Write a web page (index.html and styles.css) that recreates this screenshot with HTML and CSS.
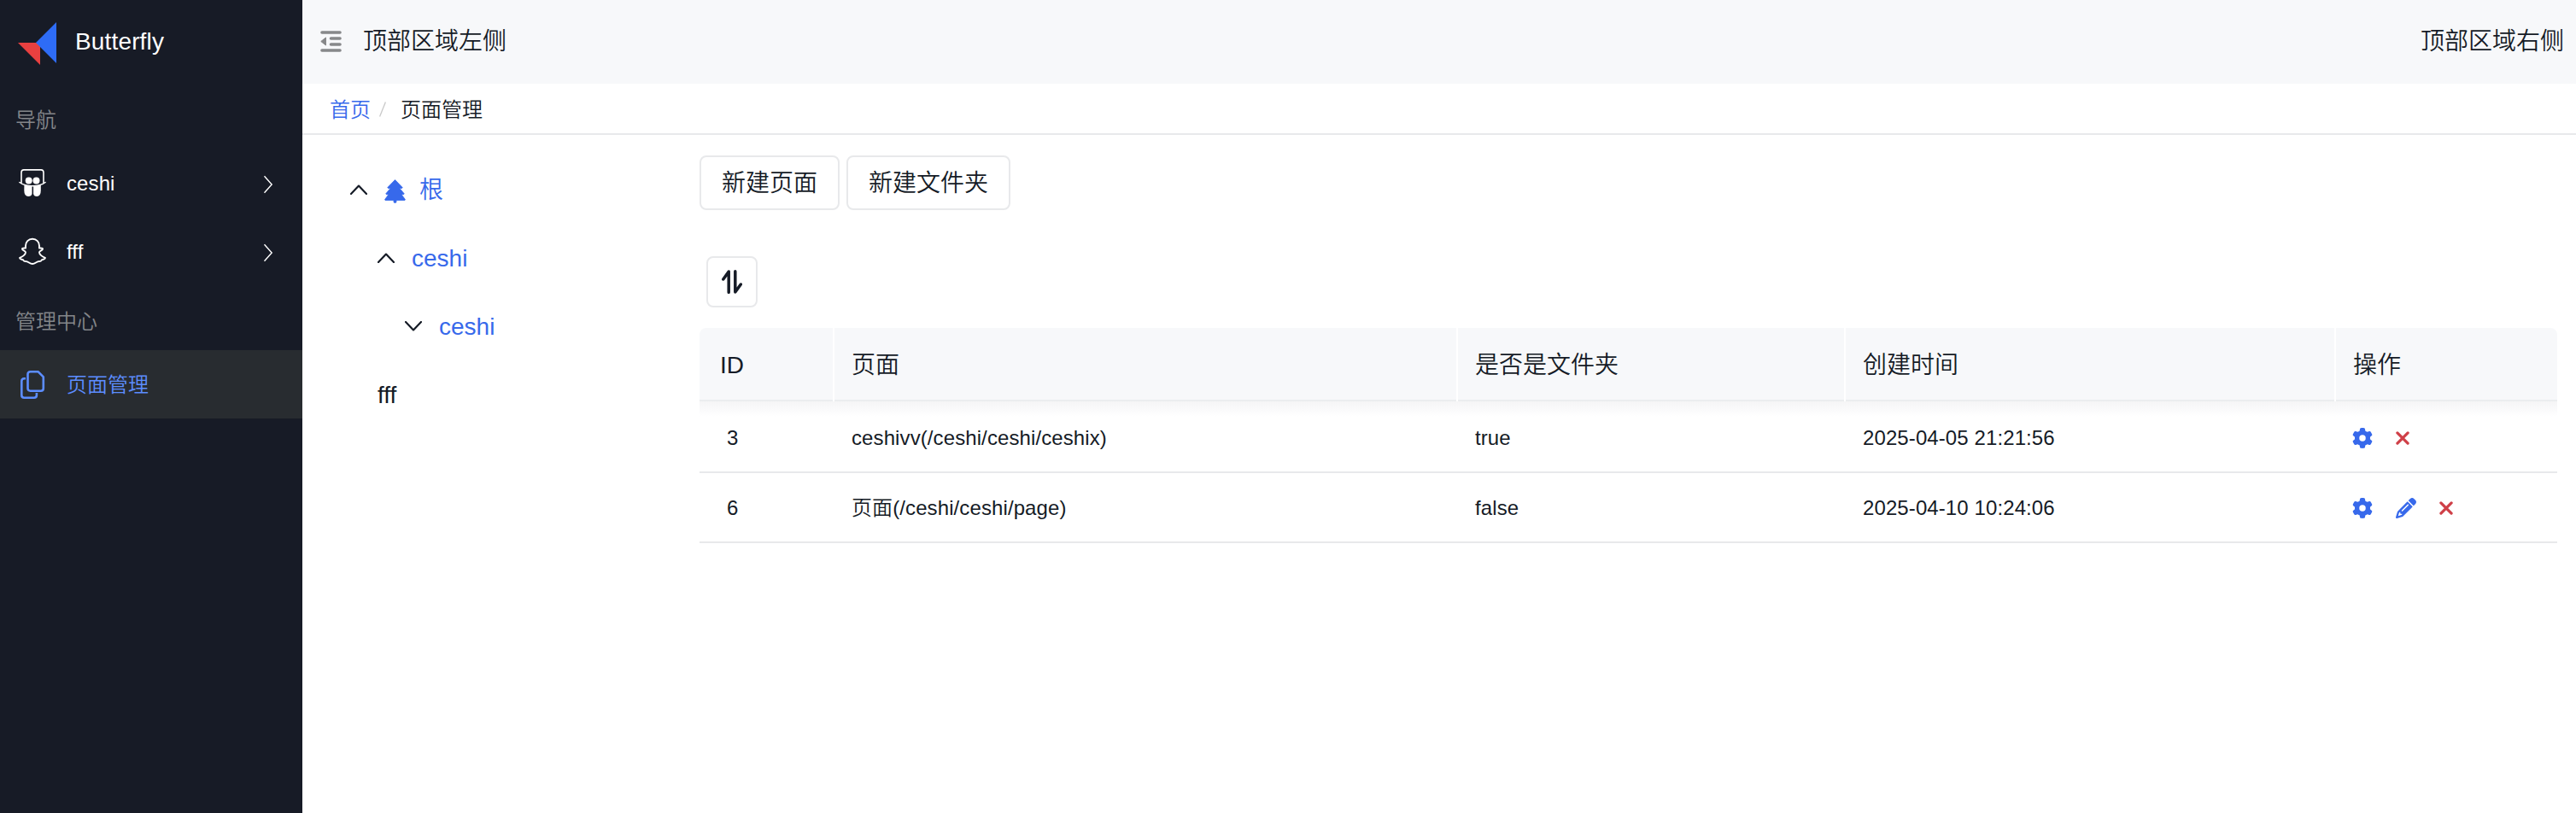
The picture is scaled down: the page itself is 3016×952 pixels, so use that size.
FILE: index.html
```html
<!DOCTYPE html>
<html lang="zh-CN">
<head>
<meta charset="utf-8">
<title>Butterfly</title>
<link rel="stylesheet" href="styles.css">
</head>
<body>
<svg class="defs" width="0" height="0">
  <symbol id="gear" viewBox="0 0 512 512"><path d="M495.9 166.6c3.2 8.7 .5 18.4-6.4 24.6l-43.3 39.4c1.1 8.3 1.7 16.8 1.7 25.4s-.6 17.1-1.7 25.4l43.3 39.4c6.9 6.2 9.6 15.9 6.4 24.6c-4.4 11.9-9.7 23.3-15.8 34.3l-4.7 8.1c-6.6 11-14 21.4-22.1 31.2c-5.9 7.2-15.7 9.6-24.5 6.8l-55.7-17.7c-13.4 10.3-28.2 18.9-44 25.4l-12.5 57.1c-2 9.1-9 16.3-18.2 17.8c-13.8 2.3-28 3.5-42.5 3.5s-28.7-1.2-42.5-3.5c-9.2-1.5-16.2-8.7-18.2-17.8l-12.5-57.1c-15.8-6.5-30.6-15.1-44-25.4L83.1 425.9c-8.8 2.8-18.6 .3-24.5-6.8c-8.1-9.8-15.5-20.2-22.1-31.2l-4.7-8.1c-6.1-11-11.4-22.4-15.8-34.3c-3.2-8.7-.5-18.4 6.4-24.6l43.3-39.4C64.6 273.1 64 264.6 64 256s.6-17.1 1.7-25.4L22.4 191.2c-6.9-6.2-9.6-15.9-6.4-24.6c4.4-11.9 9.7-23.3 15.8-34.3l4.7-8.1c6.6-11 14-21.4 22.1-31.2c5.9-7.2 15.7-9.6 24.5-6.8l55.7 17.7c13.4-10.3 28.2-18.9 44-25.4l12.5-57.1c2-9.1 9-16.3 18.2-17.8C227.3 1.2 241.5 0 256 0s28.7 1.2 42.5 3.5c9.2 1.5 16.2 8.7 18.2 17.8l12.5 57.1c15.8 6.5 30.6 15.1 44 25.4l55.7-17.7c8.8-2.8 18.6-.3 24.5 6.8c8.1 9.8 15.5 20.2 22.1 31.2l4.7 8.1c6.1 11 11.4 22.4 15.8 34.3zM256 336a80 80 0 1 0 0-160 80 80 0 1 0 0 160z"/></symbol>
  <symbol id="pencil" viewBox="0 0 512 512"><path d="M410.3 231l11.3-11.3-33.9-33.9-62.1-62.1L291.7 89.8l-11.3 11.3-22.6 22.6L58.6 322.9c-10.4 10.4-18 23.3-22.2 37.4L1 480.7c-2.5 8.4-.2 17.5 6.1 23.7s15.3 8.5 23.7 6.1l120.3-35.4c14.1-4.2 27-11.8 37.4-22.2L387.7 253.7 410.3 231zM160 399.4l-9.1 22.7c-4 3.1-8.5 5.4-13.3 6.9L59.4 452l23-78.1c1.4-4.9 3.8-9.4 6.9-13.3l22.7-9.1v32c0 8.8 7.2 16 16 16h32zM362.7 18.7L348.3 33.2 325.7 55.8 314.3 67.1l33.9 33.9 62.1 62.1 33.9 33.9 11.3-11.3 22.6-22.6 14.5-14.5c25-25 25-65.5 0-90.5L453.3 18.7c-25-25-65.5-25-90.5 0zm-47.4 168l-144 144c-6.2 6.2-16.4 6.2-22.6 0s-6.2-16.4 0-22.6l144-144c6.2-6.2 16.4-6.2 22.6 0s6.2 16.4 0 22.6z"/></symbol>
  <symbol id="cross" viewBox="0 0 16 16"><path d="M1.900 1.900 14.100 14.100M14.100 1.900 1.900 14.100" fill="none" stroke="currentColor" stroke-width="3.200" stroke-linecap="round"/></symbol>
  <symbol id="fold" viewBox="0 0 20 12"><path d="M1 11 10 1.6 19 11" fill="none" stroke="currentColor" stroke-width="2.200" stroke-linecap="round" stroke-linejoin="round"/></symbol>
  <symbol id="arrow" viewBox="0 0 12 22"><path d="M1.5 1.2 10.2 11 1.5 20.8" fill="none" stroke="currentColor" stroke-width="1.4"/></symbol>
</svg>
<div class="app">
  <aside class="sidebar">
    <div class="brand">
      <svg class="brand-logo" viewBox="0 0 46 50"><path fill="#e84040" d="M0 24h22l4 4v22z"/><path fill="#2e6cf6" d="M45 0v48L21 24z"/></svg>
      <span class="brand-name">Butterfly</span>
    </div>
    <div class="group">导航</div>
    <a class="item">
      <svg class="item-icon" viewBox="0 0 32 34"><path d="M3 17.500V4.900q0-3 3-3h20q3 0 3 3V17.500" fill="none" stroke="currentColor" stroke-width="1.600"/><path d="M.9 16.500q5.600 4.200 15.100 4.200t15.100-4.200" fill="none" stroke="currentColor" stroke-width="1.500" stroke-linecap="round"/><g fill="currentColor"><circle cx="11.700" cy="14.500" r="4"/><circle cx="20.500" cy="14.500" r="4"/><path d="M6.400 19q4 1.700 9.100 1.700V30q-.8 3-4.300 3-4.900 0-4.900-7zM25.800 19q-4 1.700-8.700 1.700V30q.6 3 4 3 4.700 0 4.700-7z"/></g></svg>
      <span class="item-text">ceshi</span>
      <svg class="item-arrow"><use href="#arrow"/></svg>
    </a>
    <a class="item">
      <svg class="item-icon" viewBox="0 0 32 34"><path d="M16 2.800c-4.800 0-8 3.400-8 8v2.700c-1.700.2-4-.2-4 1 0 1.800 4 1.900 4 4.100 0 2.700-4.200 5.300-6.900 6.200 0 1.900 2.500 2.200 4.200 2.600.3 1.300.8 1.700 2 1.700 3.800-.5 5.100 2.900 8.700 2.900s4.900-3.400 8.700-2.900c1.200 0 1.700-.4 2-1.700 1.700-.4 4.200-.7 4.200-2.600-2.700-.9-6.900-3.500-6.900-6.200 0-2.200 4-2.300 4-4.100 0-1.200-2.300-.8-4-1v-2.700c0-4.600-3.200-8-8-8z" fill="none" stroke="currentColor" stroke-width="1.900" stroke-linejoin="round"/></svg>
      <span class="item-text">fff</span>
      <svg class="item-arrow"><use href="#arrow"/></svg>
    </a>
    <div class="group group-second">管理中心</div>
    <a class="item item-active">
      <svg class="item-icon" viewBox="0 0 32 34"><g fill="none" stroke="currentColor" stroke-width="2.600" stroke-linejoin="round"><path d="M13.500 2.300h9.300l6 6v13.400q0 3-3 3H13.500q-3 0-3-3V5.300q0-3 3-3z"/><path d="M8 10.300H6.300q-3 0-3 3v16.400q0 3 3 3h11.600q3 0 3-3V27"/></g></svg>
      <span class="item-text">页面管理</span>
    </a>
  </aside>
  <div class="main">
    <header class="topbar">
      <svg class="toggle" viewBox="0 0 25 25"><g stroke="currentColor" stroke-width="3.600" stroke-linecap="round"><path d="M2 2h21M12.500 9H23M12.500 16H23M2 23h21"/></g><path fill="currentColor" stroke="currentColor" stroke-linejoin="round" d="M.8 12.500 6.500 8v9z"/></svg>
      <span>顶部区域左侧</span>
      <span class="topbar-right">顶部区域右侧</span>
    </header>
    <nav class="crumbs">
      <a class="link">首页</a>
      <svg class="slash" viewBox="0 0 8 18"><path d="M.6 17.500 7.400.5" stroke="#c8c8c8" stroke-width="1.300"/></svg>
      <span>页面管理</span>
    </nav>
    <div class="content">
      <div class="tree">
        <div class="node"><svg class="fold"><use href="#fold"/></svg><svg class="pine" viewBox="0 0 25 28"><path fill="currentColor" stroke="currentColor" stroke-width=".8" stroke-linejoin="round" d="M12.500.6 21.200 9.600 20.600 10.400H17.800L23.200 16.800 22.600 17.700H20L24.400 23.600 24 24.500H14V26.300q0 1.200-1.500 1.200t-1.500-1.200V24.500H1L.6 23.600 5 17.700H2.400L1.800 16.800 7.200 10.400H4.400L3.800 9.600z"/></svg><span class="link">根</span></div>
        <div class="node level-1"><svg class="fold"><use href="#fold"/></svg><span class="link">ceshi</span></div>
        <div class="node level-2"><svg class="fold fold-down"><use href="#fold"/></svg><span class="link">ceshi</span></div>
        <div class="node level-1"><span>fff</span></div>
      </div>
      <div class="panel">
        <div class="actions"><button class="btn">新建页面</button><button class="btn">新建文件夹</button></div>
        <button class="btn sort" aria-label="排序"><svg class="sort-icon" viewBox="0 0 24 28"><path d="M1.800 11 8.200 2V26.300M15.800 1.800V26L22.300 17" fill="none" stroke="currentColor" stroke-width="3.500" stroke-linecap="round" stroke-linejoin="round"/></svg></button>
        <div class="table">
          <div class="row head"><div class="cell id">ID</div><div class="cell">页面</div><div class="cell">是否是文件夹</div><div class="cell">创建时间</div><div class="cell">操作</div></div>
          <div class="row first"><div class="cell id">3</div><div class="cell">ceshivv(/ceshi/ceshi/ceshix)</div><div class="cell">true</div><div class="cell">2025-04-05 21:21:56</div><div class="cell ops"><svg class="op"><use href="#gear"/></svg><svg class="op-x"><use href="#cross"/></svg></div></div>
          <div class="row"><div class="cell id">6</div><div class="cell">页面(/ceshi/ceshi/page)</div><div class="cell">false</div><div class="cell">2025-04-10 10:24:06</div><div class="cell ops"><svg class="op"><use href="#gear"/></svg><svg class="op"><use href="#pencil"/></svg><svg class="op-x"><use href="#cross"/></svg></div></div>
        </div>
      </div>
    </div>
  </div>
</div>
</body>
</html>
```
FILE: styles.css
```css
* { box-sizing: border-box; }
body {
  margin: 0;
  background: #fff;
  color: #151b26;
  font: 28px/42px "Liberation Sans", "Noto Sans CJK SC", sans-serif;
  font-weight: 350;
}
svg { display: block; flex: none; }
.defs { position: absolute; }
.app { display: flex; height: 952px; }

.sidebar { width: 354px; flex: none; background: #171b26; color: #fff; }
.brand { display: flex; align-items: center; height: 102px; padding: 0 0 2px 21px; }
.brand-logo { width: 46px; height: 50px; margin: 2px 21px 0 0; }
.brand-name { margin-bottom: 2px; letter-spacing: .15px; }
.group { height: 74px; padding: 18px 0 0 18px; font-size: 24px; color: #84868a; line-height: 42px; }
.group-second { padding-top: 20px; }
.item { display: flex; align-items: center; height: 80px; padding: 0 34px 0 22px; font-size: 24px; }
.item-icon { width: 32px; height: 34px; margin: 0 24px 4px 0; }
.item-text { flex: 1; margin-bottom: 2px; letter-spacing: .1px; }
.item-arrow { width: 12px; height: 22px; }
.item-active { background: #282c30; color: #5c8dff; }
.item-active .item-icon { margin-bottom: 0; }
.item-active .item-text { margin: 2px 0 0; letter-spacing: 0; }

.main { flex: 1; display: flex; flex-direction: column; }
.topbar { display: flex; align-items: center; height: 98px; padding: 0 14px 0 21px; background: #f7f8fa; }
.toggle { width: 25px; height: 25px; margin: 0 25px 2px 0; color: #87888a; }
.topbar-right { margin-left: auto; }
.crumbs { display: flex; align-items: center; height: 60px; padding: 3px 0 0 32px; border-bottom: 2px solid #e8e9eb; font-size: 24px; }
.slash { width: 8px; height: 18px; margin: 0 17px 2px 10px; }
.link { color: #3769eb; }

.content { display: flex; padding: 24px 22px 0 56px; }
.tree { width: 409px; flex: none; }
.node { display: flex; align-items: center; height: 80px; }
.node span { margin-top: 2px; }
.level-1 { padding-left: 32px; }
.level-2 { padding-left: 64px; }
.fold { width: 20px; height: 12px; margin-right: 20px; }
.fold-down { transform: rotate(180deg); }
.pine { width: 25px; height: 28px; margin: 4px 16px 0 0; color: #3769eb; }

.panel { flex: 1; }
.actions { display: flex; gap: 8px; }
.btn {
  height: 64px;
  padding: 2px 24px 0;
  border: 2px solid #e8e9eb;
  border-radius: 8px;
  background: #fff;
  color: inherit;
  font: inherit;
}
.sort { display: grid; place-items: center; width: 60px; height: 60px; margin: 54px 0 24px 8px; padding: 0; }
.sort-icon { width: 24px; height: 28px; }

.row { display: grid; grid-template-columns: 158px 730px 454px 574px 259px; height: 82px; border-bottom: 2px solid #e8e9eb; font-size: 24px; letter-spacing: .1px; }
.cell { display: flex; align-items: center; padding: 2px 0 0 20px; }
.id { padding-left: 32px; }
.head {
  height: 86px;
  border-bottom: 0;
  border-radius: 8px 8px 0 0;
  background: #f7f8fa;
  font-size: 28px;
  letter-spacing: 0;
}
.head .cell { border-right: 2px solid #fff; box-shadow: inset 0 -2px #ebedef; }
.head .cell:last-child { border-right: 0; }
.head .id { padding-left: 24px; }
.first { height: 84px; background: linear-gradient(#f5f5f6, #fff 18px); }
.first .cell { padding-top: 4px; }
.ops { gap: 27px; padding-left: 19px; color: #3769eb; }
.op { width: 24px; height: 24px; fill: currentColor; }
.op-x { width: 16px; height: 16px; color: #cf3f47; }
```
